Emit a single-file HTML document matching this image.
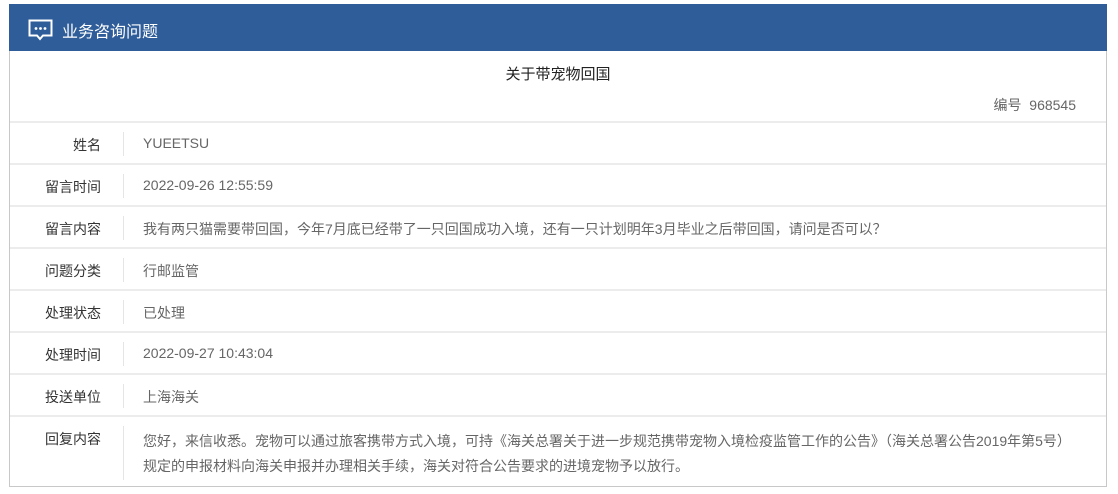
<!DOCTYPE html>
<html><head><meta charset="utf-8"><style>
body{margin:0;background:#fff;font-family:"Liberation Sans","Noto Sans CJK SC",sans-serif;font-size:14px;color:#333;}
.box{position:absolute;left:9px;top:4px;width:1096px;height:482px;border:1px solid #c8c8c8;border-top:none;background:#fff;}
.hd{position:absolute;left:-1px;top:0;width:1098px;height:47px;background:#2e5d99;color:#fff;font-size:16px;}
.hd span{position:absolute;left:53px;top:14px;}
.title{position:absolute;top:59px;width:100%;text-align:center;font-size:15px;color:#222;}
.no{position:absolute;top:91px;right:30px;color:#666;}
.row{position:absolute;left:0;width:1096px;border-top:2px solid #ececec;}
.lab{position:absolute;left:0;width:91px;text-align:right;color:#333;}
.sep{position:absolute;left:113px;top:9px;width:1px;background:#e5e5e5;}
.val{position:absolute;left:133px;color:#666;}
</style></head><body>
<div class="box">
<div class="hd"><svg style="position:absolute;left:19px;top:15px" width="26" height="24" viewBox="0 0 26 24"><path d="M1.5 1.5h22v15H15l-3 3.5-3-3.5H1.5z" fill="none" stroke="#fff" stroke-width="2"/><circle cx="8" cy="9.5" r="1.4" fill="#fff"/><circle cx="12.5" cy="9.5" r="1.4" fill="#fff"/><circle cx="17" cy="9.5" r="1.4" fill="#fff"/></svg><span>业务咨询问题</span></div>
<div class="title">关于带宠物回国</div>
<div class="no">编号&nbsp;&nbsp;968545</div>

<div class="row" style="top:117px;height:40px"><div class="lab" style="top:12px">姓名</div><div class="sep" style="height:24px"></div><div class="val" style="top:12px">YUEETSU</div></div>
<div class="row" style="top:159px;height:40px"><div class="lab" style="top:12px">留言时间</div><div class="sep" style="height:24px"></div><div class="val" style="top:12px">2022-09-26 12:55:59</div></div>
<div class="row" style="top:201px;height:40px"><div class="lab" style="top:12px">留言内容</div><div class="sep" style="height:24px"></div><div class="val" style="top:12px">我有两只猫需要带回国，今年7月底已经带了一只回国成功入境，还有一只计划明年3月毕业之后带回国，请问是否可以？</div></div>
<div class="row" style="top:243px;height:40px"><div class="lab" style="top:12px">问题分类</div><div class="sep" style="height:24px"></div><div class="val" style="top:12px">行邮监管</div></div>
<div class="row" style="top:285px;height:40px"><div class="lab" style="top:12px">处理状态</div><div class="sep" style="height:24px"></div><div class="val" style="top:12px">已处理</div></div>
<div class="row" style="top:327px;height:40px"><div class="lab" style="top:12px">处理时间</div><div class="sep" style="height:24px"></div><div class="val" style="top:12px">2022-09-27 10:43:04</div></div>
<div class="row" style="top:369px;height:40px"><div class="lab" style="top:12px">投送单位</div><div class="sep" style="height:24px"></div><div class="val" style="top:12px">上海海关</div></div>
<div class="row" style="top:411px;height:69px"><div class="lab" style="top:12px">回复内容</div><div class="sep" style="height:54px"></div><div class="val" style="top:12px;line-height:25px;width:950px">您好，来信收悉。宠物可以通过旅客携带方式入境，可持《海关总署关于进一步规范携带宠物入境检疫监管工作的公告》（海关总署公告2019年第5号）<br>规定的申报材料向海关申报并办理相关手续，海关对符合公告要求的进境宠物予以放行。</div></div>
</div>
</body></html>
